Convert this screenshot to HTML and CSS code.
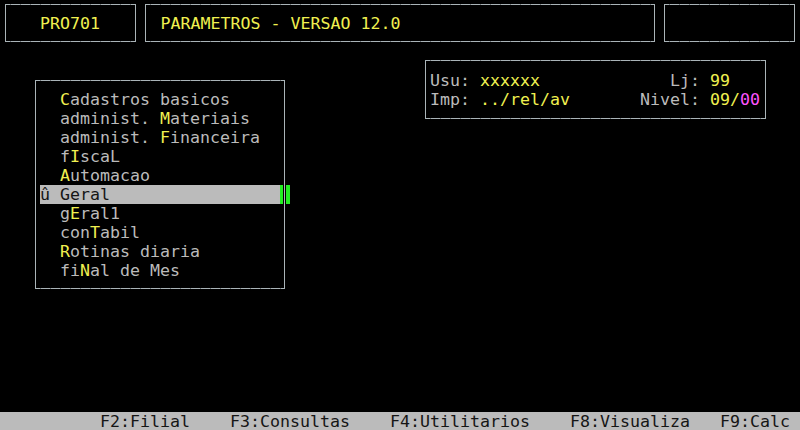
FILE: index.html
```html
<!DOCTYPE html>
<html lang="pt">
<head>
    <meta charset="UTF-8">
    <title>PRO701 - Parametros</title>
    <link rel="stylesheet" href="styles.css">
</head>
<body>
    <header class="top">
        <div class="box box-id">PRO701</div>
        <div class="box box-title">PARAMETROS - VERSAO 12.0</div>
        <div class="box box-blank"></div>
    </header>

    <main class="screen">
        <ul class="box menu">
            <li><span class="key">C</span>adastros basicos</li>
            <li>administ. <span class="key">M</span>ateriais</li>
            <li>administ. <span class="key">F</span>inanceira</li>
            <li>f<span class="key">I</span>scaL</li>
            <li><span class="key">A</span>utomacao</li>
            <li class="selected"><span class="mark">û</span> Geral</li>
            <li>g<span class="key">E</span>ral1</li>
            <li>con<span class="key">T</span>abil</li>
            <li><span class="key">R</span>otinas diaria</li>
            <li>fi<span class="key">N</span>al de Mes</li>
        </ul>

        <div class="box info">
            <div class="info-row">Usu: <span class="val">xxxxxx</span>             Lj: <span class="val">99</span></div>
            <div class="info-row">Imp: <span class="val">../rel/av</span>       Nivel: <span class="val">09/</span><span class="alt">00</span></div>
        </div>
    </main>

    <footer class="keys">          F2:Filial    F3:Consultas    F4:Utilitarios    F8:Visualiza   F9:Calc</footer>
</body>
</html>
```

FILE: styles.css
```css
html, body {
    margin: 0;
    padding: 0;
}

body {
    width: 800px;
    height: 430px;
    overflow: hidden;
    background-color: #000;
    color: #bbbbbb;
    font-family: "DejaVu Sans Mono", "Liberation Mono", monospace;
    font-size: 16.61px;
    line-height: 19px;
    display: flex;
    flex-direction: column;
}

/* line-drawing frame, with the small tick between each character cell */
.box {
    box-sizing: border-box;
    border: 1px solid #aab4b8;
    border-image: repeating-linear-gradient(to right,
        #aab4b8 0, #aab4b8 5px,
        #6c7276 5px, #6c7276 6px,
        #aab4b8 6px, #aab4b8 10px) 1;
}

/* top line: program id, title, empty box */
.top {
    display: flex;
    gap: 9px;
    padding: 4px 5px 0 5px;
}

.top .box {
    height: 38px;
    padding-top: 9px;
    color: #f0f050;
    white-space: pre;
}

.box-id {
    width: 131px;
    padding-left: 34px;
}

.box-title {
    width: 512px;
    padding-left: 15px;
}

.box-blank {
    width: 132px;
}

.screen {
    display: flex;
    align-items: flex-start;
}

/* left menu */
.menu {
    list-style: none;
    margin: 38px 0 0 35px;
    padding: 9px 0 0 0;
    width: 250px;
    height: 209px;
}

.menu li {
    padding-left: 24px;
    white-space: pre;
}

.key {
    color: #f0f050;
}

.menu li.selected {
    position: relative;
    margin: 0 4px;
    padding-left: 0;
    background-color: #bbbbbb;
    color: #151515;
}

.menu li.selected::after {
    content: "";
    position: absolute;
    top: 0;
    right: -10px;
    width: 10px;
    height: 19px;
    background: linear-gradient(to right,
        #22ee22 0, #22ee22 3px,
        #000 3px, #000 4px,
        #aab4b8 4px, #aab4b8 5px,
        #000 5px, #000 6px,
        #22ee22 6px, #22ee22 10px);
}

.mark {
    display: inline-block;
    width: 10px;
}

/* user / printer info */
.info {
    margin: 18px 0 0 140px;
    width: 341px;
    height: 59px;
    padding: 10px 0 0 4px;
}

.info-row {
    white-space: pre;
}

.val {
    color: #f0f050;
}

.alt {
    color: #ff55ff;
}

/* function keys bar */
.keys {
    margin-top: auto;
    height: 18px;
    background-color: #bbbbbb;
    color: #151515;
    white-space: pre;
}
```
